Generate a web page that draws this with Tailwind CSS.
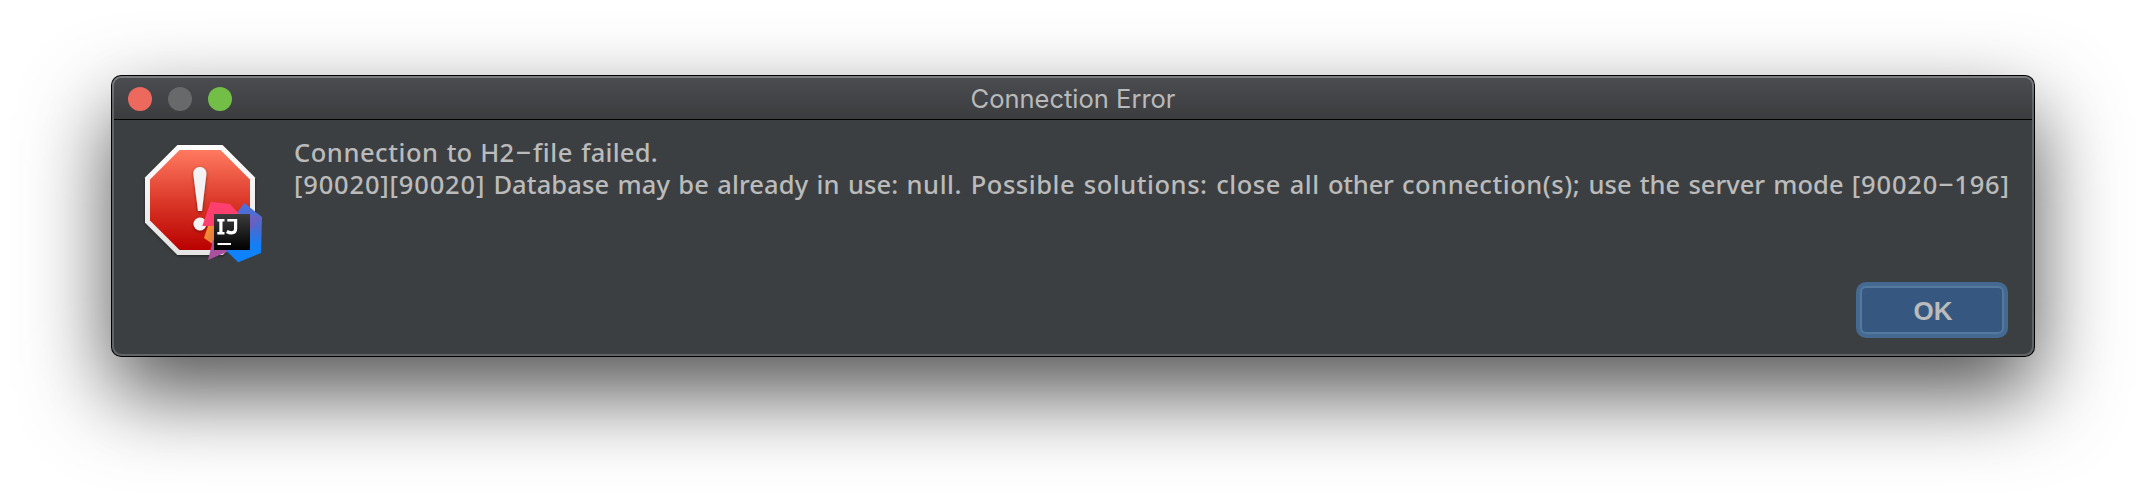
<!DOCTYPE html>
<html lang="en">
<head>
<meta charset="utf-8">
<title>Connection Error</title>
<script src="https://cdn.jsdelivr.net/npm/@tailwindcss/browser@4"></script>
</head>
<body class="bg-white w-[2146px] h-[504px] overflow-hidden pt-[75px] pl-[111px]">
<div class="w-[1924px] h-[282px] rounded-[10px] bg-black p-px shadow-[0_36px_84px_rgba(0,0,0,0.68)]">
  <div class="w-full h-full rounded-[9px] bg-linear-to-b from-[#7c7d80] via-[#606466] via-10% to-[#606466] p-[2px]">
    <div class="w-full h-full rounded-[8px] bg-[#3c3f41] overflow-hidden flex flex-col">
      <header class="h-[42px] shrink-0 border-b border-black bg-linear-to-b from-[#4b4c50] to-[#3b3c3e] flex items-center">
        <div class="flex gap-4 w-[200px] pl-[14px]">
          <span class="size-6 rounded-full bg-[#ed695e]"></span>
          <span class="size-6 rounded-full bg-[#68696b]"></span>
          <span class="size-6 rounded-full bg-[#72be47]"></span>
        </div>
        <h1 class="flex-1 text-center font-['Inter'] text-[25.5px] leading-none text-[#b9babb] whitespace-nowrap pt-px">Connection Error</h1>
        <div class="w-[200px]"></div>
      </header>
      <main class="flex flex-1">
        <svg class="w-[130px] h-[130px] ml-[26px] mt-[20px] shrink-0" viewBox="140 140 130 130">
          <defs>
            <linearGradient id="r" x1="0" y1="0" x2="0" y2="1"><stop offset="0" stop-color="#ff7a60"/><stop offset=".5" stop-color="#dc3a2a"/><stop offset="1" stop-color="#b90000"/></linearGradient>
            <linearGradient id="w" x1="0" y1="0" x2="0" y2="1"><stop offset="0" stop-color="#fff"/><stop offset="1" stop-color="#e4e4e4"/></linearGradient>
            <linearGradient id="k" x1="0" y1="0" x2="0" y2="1"><stop offset="0" stop-color="#3c3c3c"/><stop offset="1" stop-color="#000"/></linearGradient>
            <linearGradient id="b" x1="0" y1="0" x2="0" y2="1"><stop offset="0" stop-color="#4a72dc"/><stop offset=".4" stop-color="#5068cc"/><stop offset=".7" stop-color="#147ff5"/><stop offset="1" stop-color="#0a84ff"/></linearGradient>
            <linearGradient id="p" x1="0" y1="0" x2="1" y2="1"><stop offset="0" stop-color="#fb9b25"/><stop offset="1" stop-color="#e0704a"/></linearGradient>
            <filter id="s" x="-20%" y="-20%" width="140%" height="140%"><feDropShadow dx="0" dy="1" stdDeviation="1.5" flood-opacity=".5"/></filter>
          </defs>
          <path filter="url(#s)" fill="url(#w)" d="M177.500 145H222.500L255 177.500V222.500L222.500 255H177.500L145 222.500V177.500Z"/>
          <path fill="url(#r)" d="M179.500 150H220.500L250 179.500V220.500L220.500 250H179.500L150 220.500V179.500Z"/>
          <g filter="url(#s)" fill="#f3f3f3"><path d="M193.300 174C193 164.500 206.700 164.500 206.400 174L202 211H198Z"/><circle cx="200" cy="224" r="6.500"/></g>
          <path fill="url(#p)" d="M208 226L204 238L214 245V226Z"/>
          <path fill="#a9519f" d="M213 240L208 260L229 251V240Z"/>
          <path fill="url(#b)" d="M236.700 213.300L244.300 203L262 217L261 253L238.300 262.300L226.500 251Z"/>
          <path fill="#9a50a8" d="M262 217L248 232V214Z" opacity=".35"/>
          <path fill="#fd3f70" d="M210.700 201.700L230 204L238.500 213.500V226H202.300Z"/>
          <path fill="url(#k)" d="M214 214H250V250H214Z"/>
          <path fill="#fff" d="M217.500 243H231V245H217.500Z"/>
          <path stroke="#fff" fill="none" stroke-width="2.400" d="M217.300 220.300H224.500M217.300 233.200H224.500M227.300 220.300H236"/>
          <path stroke="#fff" fill="none" stroke-width="3.200" d="M220.900 220V233M235.600 219.100V228.500Q235.600 232.800 231.500 232.800Q229 232.800 226.800 231.500"/>
        </svg>
        <div class="flex flex-col flex-1 pl-[24px]">
          <div class="pt-[16px] font-['Noto_Sans'] font-medium text-[25.5px] leading-[32px] text-[#bbbbbb] whitespace-nowrap [word-spacing:1.6px]">
            <p><span class="tracking-[0.54px]">Connection</span> to H2<span class="inline-block w-[19px] text-center scale-x-200 -translate-y-[2px]">-</span><span class="tracking-[0.65px]">file</span> <span class="tracking-[0.25px]">failed.</span></p>
            <p><span class="tracking-[0.83px]">[90020][90020]</span> <span class="tracking-[0.1px]">Database may be already in use:</span> <span class="tracking-[0.53px]">null. Possible solutions: close all</span> <span class="tracking-[-0.2px]">other</span> <span class="tracking-[0.55px]">connection(s);</span> use the server mode <span class="tracking-[0.85px]">[90020<span class="inline-block w-[16px] text-center tracking-normal scale-x-200 -translate-y-[2px]">-</span>196]</span></p>
          </div>
          <button class="mt-[82px] mr-[24px] self-end w-[152px] h-[56px] rounded-[10px] bg-[#446a92] p-1 flex">
            <span class="flex-1 rounded-[6px] border-2 border-[#54799f] bg-[#365880] flex items-center justify-center font-['Liberation_Sans'] font-bold text-[26px] text-[#bbbbbb] pt-[2px] pl-[2px]">OK</span>
          </button>
        </div>
      </main>
    </div>
  </div>
</div>
</body>
</html>
